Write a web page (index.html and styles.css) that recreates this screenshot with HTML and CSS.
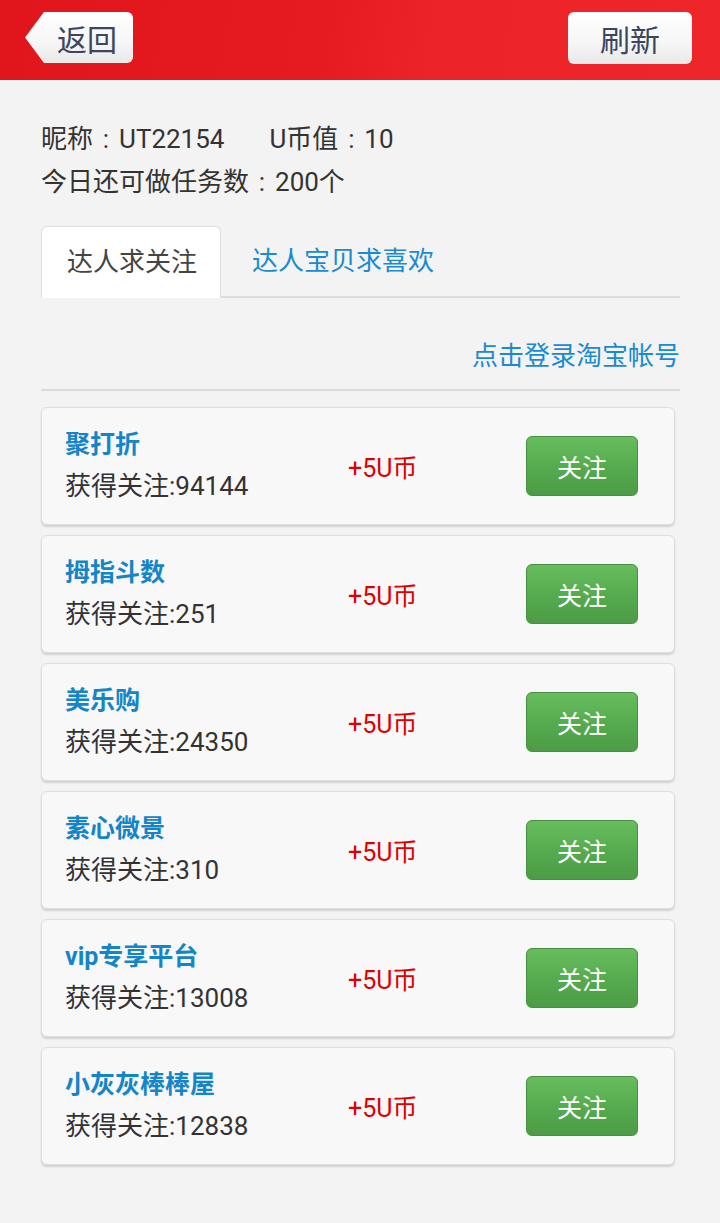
FILE: index.html
```html
<!DOCTYPE html>
<html lang="zh">
<head>
    <meta charset="UTF-8">
    <meta name="viewport" content="width=device-width, initial-scale=1.0">
    <title>达人求关注</title>
    <link rel="stylesheet" href="styles.css">
</head>
<body>
    <header class="top-bar">
        <button class="back-btn">返回</button>
        <button class="refresh-btn">刷新</button>
    </header>

    <div class="page">
        <div class="user-info">
            <p><span class="nick">昵称<span class="colon">:</span>UT22154</span>U币值<span class="colon">:</span>10</p>
            <p>今日还可做任务数<span class="colon">:</span>200个</p>
        </div>

        <div class="tabs">
            <div class="tab active">达人求关注</div>
            <div class="tab">达人宝贝求喜欢</div>
        </div>

        <div class="login-row">
            <a class="login-link">点击登录淘宝帐号</a>
        </div>

        <ul class="task-list">
            <li class="task-card">
                <div class="task-info">
                    <div class="task-name">聚打折</div>
                    <div class="task-count">获得关注:94144</div>
                </div>
                <div class="task-reward">+5U币</div>
                <button class="follow-btn">关注</button>
            </li>
            <li class="task-card">
                <div class="task-info">
                    <div class="task-name">拇指斗数</div>
                    <div class="task-count">获得关注:251</div>
                </div>
                <div class="task-reward">+5U币</div>
                <button class="follow-btn">关注</button>
            </li>
            <li class="task-card">
                <div class="task-info">
                    <div class="task-name">美乐购</div>
                    <div class="task-count">获得关注:24350</div>
                </div>
                <div class="task-reward">+5U币</div>
                <button class="follow-btn">关注</button>
            </li>
            <li class="task-card">
                <div class="task-info">
                    <div class="task-name">素心微景</div>
                    <div class="task-count">获得关注:310</div>
                </div>
                <div class="task-reward">+5U币</div>
                <button class="follow-btn">关注</button>
            </li>
            <li class="task-card">
                <div class="task-info">
                    <div class="task-name">vip专享平台</div>
                    <div class="task-count">获得关注:13008</div>
                </div>
                <div class="task-reward">+5U币</div>
                <button class="follow-btn">关注</button>
            </li>
            <li class="task-card">
                <div class="task-info">
                    <div class="task-name">小灰灰棒棒屋</div>
                    <div class="task-count">获得关注:12838</div>
                </div>
                <div class="task-reward">+5U币</div>
                <button class="follow-btn">关注</button>
            </li>
        </ul>
    </div>
</body>
</html>
```

FILE: styles.css
```css
body {
    margin: 0;
    padding: 0;
    min-height: 100vh;
    background: #f3f3f3;
    font-family: Roboto, "Noto Sans CJK SC", sans-serif;
    color: #333;
}

.top-bar {
    height: 80px;
    box-sizing: border-box;
    padding: 12px 28px 0 25px;
    display: flex;
    justify-content: space-between;
    align-items: flex-start;
    background: linear-gradient(100deg, #e0161c 0%, #e61b20 45%, #ec2327 60%, #ef2629 100%);
}

.back-btn,
.refresh-btn {
    border: none;
    padding: 0;
    font-family: inherit;
    font-size: 30px;
    color: #3b4660;
    background: linear-gradient(#ffffff, #f6f6f6 60%, #e8e8e8);
    cursor: pointer;
}
.back-btn {
    width: 108px;
    height: 51px;
    padding-left: 16px;
    border-radius: 0 6px 6px 0;
    clip-path: polygon(0 50%, 19px 0, 100% 0, 100% 100%, 19px 100%);
}
.refresh-btn {
    width: 124px;
    height: 52px;
    border-radius: 6px;
}

.page {
    padding: 0 40px 0 41px;
}

.user-info {
    padding-top: 38px;
}
.user-info p {
    margin: 0;
    font-size: 26px;
    line-height: 43px;
    color: #333;
}
.colon {
    display: inline-block;
    width: 26px;
    text-align: center;
}
.nick {
    margin-right: 45px;
}

.tabs {
    margin-top: 22px;
    display: flex;
    align-items: flex-end;
    border-bottom: 2px solid #dcdcdc;
}
.tab {
    height: 70px;
    line-height: 70px;
    font-size: 26px;
    color: #1a8ad2;
    padding: 0 26px 0 31px;
}
.tab.active {
    width: 180px;
    box-sizing: border-box;
    padding: 0 0 0 25px;
    margin-bottom: -2px;
    height: 72px;
    color: #444;
    background: #fff;
    border: 1px solid #ddd;
    border-bottom: none;
    border-radius: 6px 6px 0 0;
}

.login-row {
    margin-top: 38px;
    padding-bottom: 13px;
    border-bottom: 2px solid #dcdcdc;
    text-align: right;
}
.login-link {
    font-size: 26px;
    line-height: 40px;
    color: #1a8ad2;
}

.task-list {
    list-style: none;
    margin: 16px 0 0;
    padding: 0;
    width: 634px;
}
.task-card {
    display: grid;
    grid-template-columns: 283px 1fr auto;
    align-items: center;
    height: 118px;
    box-sizing: border-box;
    margin-bottom: 10px;
    padding: 0 36px 0 23px;
    background: #f8f8f8;
    border: 1px solid #dedede;
    border-radius: 6px;
    box-shadow: 0 2px 2px rgba(0, 0, 0, 0.14);
}
.task-name {
    font-size: 25px;
    font-weight: bold;
    line-height: 40px;
    color: #1485c8;
}
.task-count {
    font-size: 26px;
    line-height: 42px;
    color: #333;
}
.task-reward {
    font-size: 25px;
    color: #e00000;
}
.follow-btn {
    width: 112px;
    height: 60px;
    font-family: inherit;
    font-size: 25px;
    color: #fff;
    background: linear-gradient(#66bd5d, #55a84d 60%, #4c9c45);
    border: 1px solid #45913f;
    border-radius: 6px;
    cursor: pointer;
}
```
